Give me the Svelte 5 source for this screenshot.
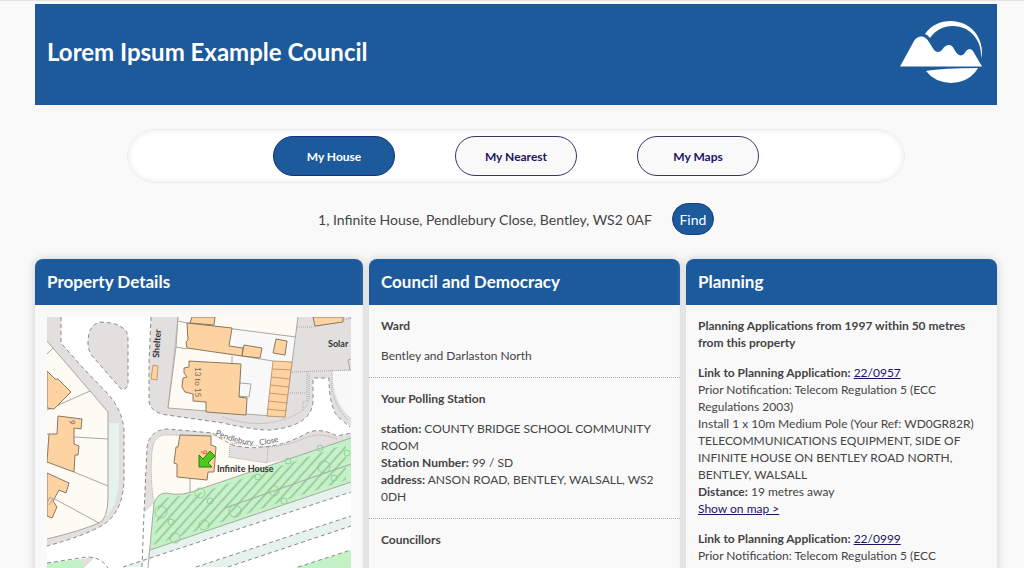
<script lang="ts">
  type Application = {
    ref: string;
    type: string;
    details: string;
    distance: number;
  };

  const tabs = ['My House', 'My Nearest', 'My Maps'];
  let activeTab = $state('My House');

  const station = [
    { label: 'station', value: 'COUNTY BRIDGE SCHOOL COMMUNITY ROOM' },
    { label: 'Station Number', value: '99 / SD' },
    { label: 'address', value: 'ANSON ROAD, BENTLEY, WALSALL, WS2 0DH' }
  ];

  const applications: Application[] = [
    {
      ref: '22/0957',
      type: 'Prior Notification: Telecom Regulation 5 (ECC Regulations 2003)',
      details:
        'Install 1 x 10m Medium Pole (Your Ref: WD0GR82R) TELECOMMUNICATIONS EQUIPMENT, SIDE OF INFINITE HOUSE ON BENTLEY ROAD NORTH, BENTLEY, WALSALL',
      distance: 19
    },
    {
      ref: '22/0999',
      type: 'Prior Notification: Telecom Regulation 5 (ECC Regulations 2003)',
      details: '',
      distance: 19
    }
  ];

  const trees = [
    [161, 512, 6],
    [171, 522, 3],
    [200, 493, 5],
    [210, 501, 3],
    [235, 511, 6],
    [204, 525, 5],
    [258, 477, 3],
    [274, 491, 5],
    [284, 501, 3],
    [288, 461, 3],
    [324, 467, 6],
    [334, 478, 3],
    [320, 448, 3],
    [347, 453, 3],
    [175, 538, 5]
  ];
</script>

<div class="page">
  <header>
    <h1>Lorem Ipsum Example Council</h1>
    <svg class="logo" viewBox="898 19 86 66" role="img" aria-label="Council logo">
      <path d="M924 34C936 16 965 17 976 35C981 43 982 52 980 59C981 45 975 35 965 29C952 23 937 26 929 38Q927 35 924 34Z" />
      <path d="M899 66.500L913 41Q916 36 921 36.500Q925 37 928 42L933 50Q937 54 941 50Q944 45 948 45Q951 45 953 49Q956 55 960 55.500Q963 55 965 51Q969 47 972 51L981 66.500Z" />
      <path d="M925 71Q942 68 977 68Q969 82 950 83Q933 82 925 71Z" />
    </svg>
  </header>

  <nav>
    {#each tabs as tab}
      <button class="tab" class:active={activeTab === tab} onclick={() => (activeTab = tab)}>{tab}</button>
    {/each}
  </nav>

  <div class="search">
    <span>1, Infinite House, Pendlebury Close, Bentley, WS2 0AF</span>
    <button class="find">Find</button>
  </div>

  <main>
    <section class="card">
      <h2>Property Details</h2>
      <div class="block">
        <svg class="map" viewBox="47 317 304 304" role="img" aria-label="Map of the property">
          <defs>
            <pattern id="hatch" width="7" height="7" patternUnits="userSpaceOnUse" patternTransform="rotate(42)">
              <path d="M3 0V7" stroke="#7fa582" />
            </pattern>
            <path id="close" d="M215 435C230 441 244 446 260 445C272 444 278 442 292 438" />
          </defs>
          <rect x="47" y="317" width="304" height="304" fill="#fff" />

          <!-- west side pavement and plots -->
          <path class="paved" d="M47 317H61V343L83 368L107 393Q122 409 124 430V480Q123 512 103 525Q84 536 47 546Z" />
          <path class="plot" d="M47 341L90 391L108 412V497Q108 519 99 523Q80 531 47 539Z" />
          <path class="verge" d="M109 423H119V480Q118 507 103 520Q108 512 108 497Z" />
          <path class="kerb" d="M61 317V343L83 368L107 393Q122 409 124 430V480Q123 512 103 525Q84 536 47 546" />
          <path class="fence" d="M47 341L90 391L108 412V497Q108 519 99 523Q80 531 47 539M47 354L53 348M47 410L90 391M74 437L108 439M47 434H49M74 472L108 486M53 498L99 523" />
          <path class="building" d="M47 371L55 379H58L71 392L54 409L47 408Z" />
          <path class="building" d="M58 416L82 419L81 429L74 428V444L79 446L78 455L75 455L74 472L47 462L49 434H57Z" />
          <path class="building" d="M47 473L69 483L66 493L59 490L53 501L57 507L52 518L47 516Z" />
          <path class="fence" d="M47 503L50 497L53 499L49 505" />

          <!-- island -->
          <path class="paved kerb" d="M100 322L112 323Q122 326 126 331Q128 334 128 341V385Q125 391 121 389L94 358Q88 352 88 343Q88 325 100 322Z" />

          <!-- north side pavement -->
          <path class="paved" d="M151 317H351V427L337 416Q329 404 329 378H313V400Q313 426 270 430Q253 430 223 423L167 415Q149 412 149 400V363Z" />
          <path class="plot" d="M178 317H298L285 417L168 408L176 347Z" />
          <path fill="#f8f8f8" d="M232 328L296 337L285 417L241 412Z" />
          <path fill="#f8f8f8" d="M332 371H351V418Q333 404 332 371Z" />
          <path class="kerb" d="M151 317L149 363V400Q149 412 167 415L223 423Q253 430 270 430Q313 426 313 400V378H329Q329 404 337 416L350 427" />
          <path class="fence" d="M178 317L176 347L168 408L285 417L298 317M178 321L187 323M176 347L187 349M187 323L296 337M242 356L273 361M232 356V363M240 383L251 384L249 397L239 396" />
          <path class="footway" d="M178 317L168 408M297 327H312Q330 324 351 318M292 372L351 370M307 371V393M290 393H307V401L303 402V411M223 417Q260 430 290 417Q308 411 309 398V373M332 371V390Q336 408 348 420" />
          <path class="building" d="M192 317H215L214 325L190 323Z" />
          <path class="building" d="M187 323L232 328L229 346L243 348L242 356L187 348L186 342L188 340Z" />
          <path class="building" d="M244 345L262 348L260 358L242 356Z" />
          <path class="building" d="M276 339L287 341L285 355L273 353Z" />
          <path class="building" d="M313 317L315 326L343 322V317Z" />
          <path class="building" d="M189 361L241 364L239 397L247 398L246 415L206 412V402L193 401V394L185 392L182 387L183 378L187 377L184 373V368L189 367Z" />
          <path class="building light" d="M273 361L292 362L285 417L267 416ZM272 369L291 370M271 377L290 379M270 385L289 387M269 393L288 395M268 401L287 403M267 409L286 411" />
          <path class="building light" d="M153 365L158 366L157 380L151 379Z" />
          <path class="fence" d="M351 359L348 360L350 370M350 319V317" />

          <!-- plot of the selected house -->
          <path class="paved" d="M144 513L147 447Q150 430 167 429L213 433Q222 440 233 445Q248 449 262 447Q287 445 307 433Q320 427 337 436L351 433V482L190 492L154 503Z" />
          <path class="plot" d="M155 440Q157 436 165 435L213 436L230 443L229 457L267 463L300 457L190 494L154 505Q150 478 152 452Z" />
          <path class="verge" d="M150 550L351 482V492L123 567H142Z" />
          <path class="verge" d="M196 567L351 516V526L228 567Z" />
          <path class="grass" d="M154 503Q158 493 166 493Q182 497 200 489L351 438V482L150 550Z" />
          <path fill="url(#hatch)" d="M158 507L166 498L200 493L346 444V480L154 545Z" />
          <path class="grass" d="M298 567L351 550V621H160Z" />
          <path class="fence" d="M154 503Q158 493 166 493Q182 497 200 489L351 438M351 482L150 550M154 503L148 568M190 478V492M225 508L351 464" />
          <path class="footway" d="M154 503Q150 478 152 452Q153 436 165 435H180M229 457L230 443L268 447L267 463L229 457M268 447Q287 446 303 439Q320 431 337 439" />
          <path class="kerb" d="M142 567L144 513L147 447Q150 430 167 429L213 433Q222 440 233 445Q248 449 262 447Q287 445 307 433Q320 427 337 436L351 433" />
          <path class="kerb" d="M123 567L351 492M196 567L351 516M228 567L351 526M298 567L351 550" />
          {#each trees as [cx, cy, r]}
            <circle class="tree" {cx} {cy} {r} />
          {/each}
          <path class="building" d="M180 435L211 436V445L216 447L214 472L208 472L207 480L177 477V464L174 463L176 447H178Z" />

          <!-- south west corner -->
          <path class="paved" d="M80 559L95 557L84 568H80Z" />
          <path class="grass" d="M47 563L80 559L84 568V621H47Z" />
          <path class="kerb" d="M47 563L80 558Q99 554 108 568" />

          <path class="arrow" d="M199 467V455L203 459L210 451L215 456L208 463L212 467Z" />

          <text class="label" transform="translate(159 358) rotate(-86)">Shelter</text>
          <text class="label" x="328" y="347">Solar</text>
          <text class="label" x="217" y="472">Infinite House</text>
          <text class="number" transform="translate(195 367) rotate(90)">13 to 15</text>
          <text class="number red" transform="translate(201 450) rotate(90)">9</text>
          <text class="number" transform="translate(69 420) rotate(90)">9</text>
          <text class="street"><textPath href="#close">Pendlebury &#160; Close</textPath></text>
        </svg>
      </div>
    </section>

    <section class="card">
      <h2>Council and Democracy</h2>
      <div class="block">
        <h3>Ward</h3>
        <p>Bentley and Darlaston North</p>
      </div>
      <div class="block">
        <h3>Your Polling Station</h3>
        <p>
          {#each station as { label, value }}
            <span class="line"><b>{label}:</b> {value}</span>
          {/each}
        </p>
      </div>
      <div class="block">
        <h3>Councillors</h3>
      </div>
    </section>

    <section class="card">
      <h2>Planning</h2>
      <div class="block">
        <h3>Planning Applications from 1997 within 50 metres from this property</h3>
        {#each applications as app}
          <p>
            <span class="line"><b>Link to Planning Application:</b> <a href="#{app.ref}">{app.ref}</a></span>
            <span class="line">{app.type}</span>
            <span class="line">{app.details}</span>
            <span class="line"><b>Distance:</b> {app.distance} metres away</span>
            <a href="#map">Show on map &gt;</a>
          </p>
        {/each}
      </div>
    </section>
  </main>
</div>

<style>
  :global(body) {
    background: #f9f9f9;
  }

  .page {
    box-sizing: border-box;
    height: 100vh;
    overflow: hidden;
    padding: 3px 27px 0 35px;
    border-top: 1px solid #e4e4e4;
    color: #444;
    font-family: Lato, sans-serif;
    font-size: 12px;
    line-height: 17px;
  }

  header {
    display: flex;
    align-items: center;
    justify-content: space-between;
    height: 101px;
    padding: 0 12px 6px;
    box-sizing: border-box;
    background: #1c5a9c;
    color: #fff;
  }

  h1 {
    margin: 0;
    font-size: 24px;
    line-height: 32px;
  }

  .logo {
    width: 86px;
    height: 66px;
    fill: #fff;
  }

  nav {
    display: flex;
    justify-content: center;
    gap: 60px;
    margin: 24px 92px 0;
    padding: 6px;
    border: 1px solid #eee;
    border-radius: 27px;
    background: #fff;
    box-shadow: inset 0 0 6px #e8e8e8;
  }

  button {
    font-family: inherit;
    cursor: pointer;
  }

  .tab {
    width: 122px;
    height: 40px;
    padding: 0;
    border: 1px solid #3a3568;
    border-radius: 20px;
    background: #f9f9f9;
    color: #1b1464;
    font-size: 12px;
    font-weight: bold;
  }

  .tab.active {
    border-color: #16307c;
    background: #1c5a9c;
    color: #fff;
  }

  .search {
    display: flex;
    align-items: center;
    justify-content: center;
    gap: 20px;
    margin: 20px 0 24px;
    font-size: 14px;
  }

  .find {
    width: 42px;
    height: 32px;
    padding: 0;
    border: 1px solid #16407c;
    border-radius: 16px;
    background: #1c5a9c;
    color: #fff;
    font-size: 14px;
  }

  main {
    display: grid;
    grid-template-columns: auto 1fr 1fr;
    gap: 6px;
  }

  .card {
    min-height: 400px;
    border-radius: 8px;
    background: #f9f9f9;
    box-shadow: 0 0 10px #ccc;
  }

  h2 {
    margin: 0;
    padding: 12px;
    border-radius: 8px 8px 0 0;
    background: #1c5a9c;
    color: #fff;
    font-size: 17px;
    line-height: 22px;
  }

  .block {
    padding: 12px 12px 13px;
  }

  .block + .block {
    border-top: 1px dotted #aaa;
  }

  h3 {
    margin: 0;
    font-size: 12px;
  }

  p {
    margin: 13px 0 0;
  }

  .line {
    display: block;
  }

  a {
    color: #1b1464;
  }

  .map {
    display: block;
    width: 304px;
    height: 304px;
  }

  .paved {
    fill: #e2dfdf;
  }

  .plot {
    fill: #fdfbf3;
  }

  .verge {
    fill: #e6f2ec;
  }

  .grass {
    fill: #c3f2c6;
  }

  .kerb {
    stroke: #8c8989;
    stroke-dasharray: 4 3;
  }

  .kerb:not(.paved),
  .fence,
  .footway,
  .tree {
    fill: none;
  }

  .fence {
    stroke: #a9a6a4;
  }

  .footway {
    stroke: #aaa;
    stroke-dasharray: 1 1;
  }

  .tree {
    stroke: #8fcf93;
  }

  .building {
    fill: #fdd3a2;
    stroke: #8b7761;
  }

  .light {
    stroke: #c59b70;
  }

  .arrow {
    fill: #4cc91c;
    stroke: #277f12;
  }

  .label {
    fill: #333;
    font-size: 9px;
    font-weight: bold;
  }

  .number {
    fill: #765;
    font-size: 8px;
  }

  .red {
    fill: #d33;
  }

  .street {
    fill: #666;
    font-size: 8px;
  }
</style>
